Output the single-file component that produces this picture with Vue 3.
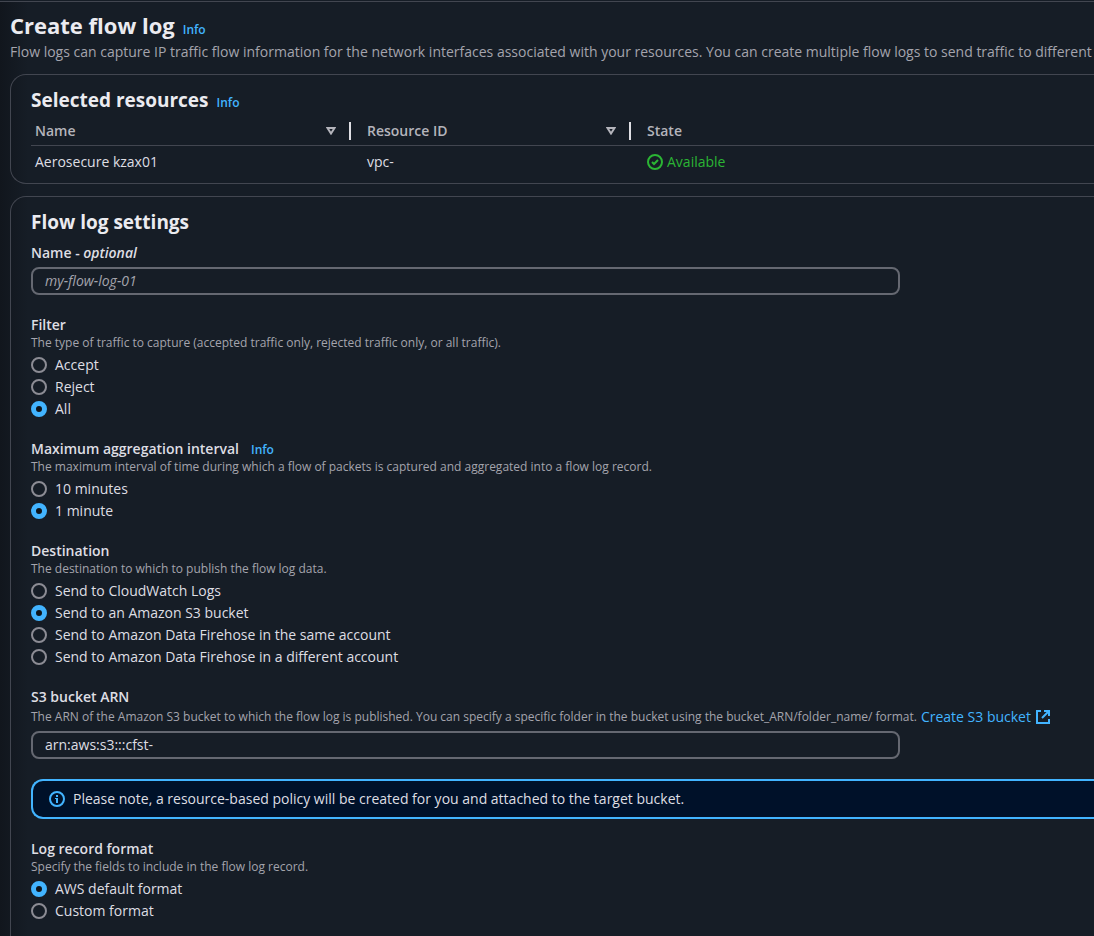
<script setup>
import { reactive, ref } from 'vue'

const resources = [{ name: 'Aerosecure kzax01', id: 'vpc-', state: 'Available' }]

const name = ref('')
const bucketArn = ref('arn:aws:s3:::cfst-')

const chosen = reactive({
  filter: 'All',
  interval: '1 minute',
  destination: 'Send to an Amazon S3 bucket',
  format: 'AWS default format',
})

const groups = [
  {
    key: 'filter',
    label: 'Filter',
    hint: 'The type of traffic to capture (accepted traffic only, rejected traffic only, or all traffic).',
    options: ['Accept', 'Reject', 'All'],
  },
  {
    key: 'interval',
    label: 'Maximum aggregation interval',
    info: true,
    hint: 'The maximum interval of time during which a flow of packets is captured and aggregated into a flow log record.',
    options: ['10 minutes', '1 minute'],
  },
  {
    key: 'destination',
    label: 'Destination',
    hint: 'The destination to which to publish the flow log data.',
    options: [
      'Send to CloudWatch Logs',
      'Send to an Amazon S3 bucket',
      'Send to Amazon Data Firehose in the same account',
      'Send to Amazon Data Firehose in a different account',
    ],
  },
]

const formatGroup = {
  key: 'format',
  label: 'Log record format',
  hint: 'Specify the fields to include in the flow log record.',
  options: ['AWS default format', 'Custom format'],
}
</script>

<template>
  <main class="page">
    <header class="page-head">
      <div class="heading">
        <h1>Create flow log</h1>
        <a class="info" href="#">Info</a>
      </div>
      <p class="lead">
        Flow logs can capture IP traffic flow information for the network interfaces associated with your resources. You can create multiple flow logs to send traffic to different destinations.
      </p>
    </header>

    <section class="panel resources">
      <div class="heading">
        <h2>Selected resources</h2>
        <a class="info" href="#">Info</a>
      </div>
      <table>
        <colgroup>
          <col class="col-name" />
          <col class="col-id" />
          <col />
        </colgroup>
        <thead>
          <tr>
            <th v-for="title in ['Name', 'Resource ID']" :key="title" scope="col">
              <div class="th-inner">
                <span>{{ title }}</span>
                <button type="button" class="sort" :aria-label="'Sort by ' + title">
                  <svg width="10" height="8" viewBox="0 0 10 8">
                    <path d="M1.5 1h7L5 6.5z" fill="none" stroke="currentColor" stroke-width="2" />
                  </svg>
                </button>
                <span class="divider"></span>
              </div>
            </th>
            <th scope="col">State</th>
          </tr>
        </thead>
        <tbody>
          <tr v-for="r in resources" :key="r.name">
            <td>{{ r.name }}</td>
            <td>{{ r.id }}</td>
            <td>
              <span class="status">
                <svg width="16" height="16" viewBox="0 0 16 16" fill="none" stroke="currentColor" stroke-width="2">
                  <circle cx="8" cy="8" r="7" />
                  <path d="M5 8l2 2 4-4" />
                </svg>
                {{ r.state }}
              </span>
            </td>
          </tr>
        </tbody>
      </table>
    </section>

    <section class="panel settings">
      <h2>Flow log settings</h2>
      <div class="fields">
        <div class="field">
          <label class="label" for="log-name">Name - <i>optional</i></label>
          <input id="log-name" v-model="name" class="text" type="text" placeholder="my-flow-log-01" />
        </div>

        <fieldset v-for="g in groups" :key="g.key" class="field">
          <legend class="label">
            {{ g.label }}<a v-if="g.info" class="info" href="#">Info</a>
          </legend>
          <p class="hint">{{ g.hint }}</p>
          <div class="options">
            <label v-for="o in g.options" :key="o" class="option">
              <input v-model="chosen[g.key]" type="radio" :name="g.key" :value="o" />
              <span>{{ o }}</span>
            </label>
          </div>
        </fieldset>

        <div class="field">
          <label class="label" for="bucket-arn">S3 bucket ARN</label>
          <p class="hint hint-link">
            <span>The ARN of the Amazon S3 bucket to which the flow log is published. You can specify a specific folder in the bucket using the bucket_ARN/folder_name/ format.</span>
            <a class="external" href="#">
              Create S3 bucket
              <svg width="16" height="16" viewBox="0 0 16 16" fill="none" stroke="currentColor" stroke-width="2">
                <path d="M6 2H2v12h12v-4" />
                <path d="M9 2h5v5M14 2L7 9" />
              </svg>
            </a>
          </p>
          <input id="bucket-arn" v-model="bucketArn" class="text" type="text" />
        </div>

        <div class="note" role="note">
          <svg width="16" height="16" viewBox="0 0 16 16">
            <circle cx="8" cy="8" r="7" fill="none" stroke="currentColor" stroke-width="2" />
            <path d="M7 4h2v2H7zM6 7h3v5H7V8H6z" fill="currentColor" />
          </svg>
          <span>Please note, a resource-based policy will be created for you and attached to the target bucket.</span>
        </div>

        <fieldset class="field">
          <legend class="label">{{ formatGroup.label }}</legend>
          <p class="hint">{{ formatGroup.hint }}</p>
          <div class="options">
            <label v-for="o in formatGroup.options" :key="o" class="option">
              <input v-model="chosen.format" type="radio" name="format" :value="o" />
              <span>{{ o }}</span>
            </label>
          </div>
        </fieldset>
      </div>
    </section>
  </main>
</template>

<style>
body {
  margin: 0;
  background: #161d26;
}
</style>

<style scoped>
.page {
  box-sizing: border-box;
  min-height: 100vh;
  padding: 9px 0 0 10px;
  overflow: hidden;
  border-top: 1px solid #424650;
  margin-top: 1px;
  background: linear-gradient(to right, #11161d, #161d26 28px);
  color: #dedee3;
  font: 14px/20px "Open Sans", "Noto Sans", sans-serif;
}
h1,
h2,
p {
  margin: 0;
}
h1 {
  font-size: 22px;
  line-height: 28px;
  font-weight: 700;
  color: #ebebf0;
}
h2 {
  font-size: 19px;
  line-height: 24px;
  font-weight: 700;
  color: #ebebf0;
}
a {
  color: #42b4ff;
  text-decoration: none;
}
.heading {
  display: flex;
  align-items: baseline;
  gap: 8px;
}
.info {
  font-size: 12px;
  line-height: 16px;
  font-weight: 600;
}
.lead {
  margin-top: 3px;
  color: #a4a4ad;
  white-space: nowrap;
}
.panel {
  border: 1px solid #424650;
  border-right: 0;
  border-radius: 16px 0 0 16px;
  padding-left: 20px;
}
.resources {
  margin-top: 12px;
  padding-top: 13px;
  padding-bottom: 6px;
}
table {
  width: 100%;
  table-layout: fixed;
  border-collapse: collapse;
}
.col-name {
  width: 332px;
}
.col-id {
  width: 280px;
}
th,
td {
  padding: 0 0 0 4px;
  text-align: left;
}
th {
  height: 33px;
  padding-top: 5px;
  box-sizing: border-box;
  border-bottom: 1px solid #424650;
  font-weight: 600;
  color: #b4b4bb;
}
td {
  height: 30px;
  padding-top: 1px;
}
.th-inner {
  display: flex;
  align-items: center;
}
.sort {
  display: flex;
  margin-left: auto;
  padding: 0;
  border: 0;
  background: none;
  color: #b4b4bb;
}
.divider {
  width: 2px;
  height: 18px;
  margin: 0 12px 0 13px;
  background: #dedee3;
}
.status {
  display: flex;
  align-items: center;
  gap: 4px;
  color: #2bb534;
}
.settings {
  margin-top: 12px;
  padding-top: 13px;
  padding-bottom: 40px;
  border-bottom: 0;
  border-bottom-left-radius: 0;
}
.fields {
  display: flex;
  flex-direction: column;
  gap: 20px;
  margin-top: 9px;
}
.field {
  min-width: 0;
  margin: 0;
  padding: 0;
  border: 0;
}
.label {
  display: block;
  padding: 0;
  font-weight: 600;
}
.label .info {
  margin-left: 12px;
}
.hint {
  color: #a4a4ad;
  font-size: 12px;
  line-height: 16px;
}
.hint-link {
  display: flex;
  align-items: center;
  gap: 4px;
  line-height: 20px;
  white-space: nowrap;
}
.external {
  display: flex;
  align-items: center;
  gap: 4px;
  font-size: 14px;
}
.text {
  display: block;
  box-sizing: border-box;
  width: 100%;
  max-width: 869px;
  height: 28px;
  margin-top: 4px;
  padding: 0 12px;
  border: 2px solid #656871;
  border-radius: 8px;
  background: transparent;
  color: #dedee3;
  font: inherit;
}
.text::placeholder {
  color: #a4a4ad;
  font-style: italic;
  opacity: 1;
}
.options {
  display: flex;
  flex-direction: column;
  align-items: flex-start;
  gap: 2px;
  margin-top: 4px;
}
.option {
  display: flex;
  align-items: center;
  gap: 8px;
}
.option input {
  box-sizing: border-box;
  appearance: none;
  width: 16px;
  height: 16px;
  margin: 0;
  border: 2px solid #8c8c94;
  border-radius: 50%;
}
.option input:checked {
  border: 5px solid #42b4ff;
  background: #0f141a;
}
.note {
  display: flex;
  align-items: center;
  gap: 8px;
  padding: 8px 16px;
  border: 2px solid #42b4ff;
  border-right: 0;
  border-radius: 12px 0 0 12px;
  background: #001129;
}
.note svg {
  color: #42b4ff;
}
</style>
